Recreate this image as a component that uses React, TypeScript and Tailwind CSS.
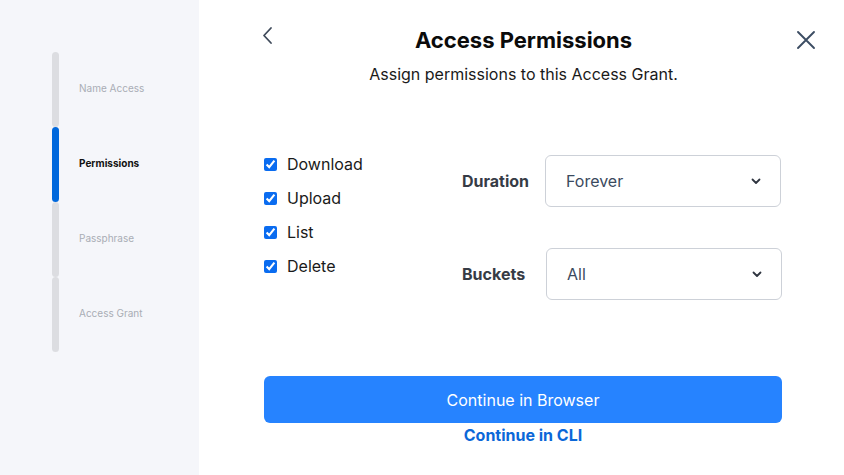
import React from "react";

const steps = [
  { label: "Name Access", active: false },
  { label: "Permissions", active: true },
  { label: "Passphrase", active: false },
  { label: "Access Grant", active: false },
];

const perms = ["Download", "Upload", "List", "Delete"];

function ChevronDown() {
  return (
    <svg width="10" height="7" viewBox="0 0 10 7" fill="none">
      <path d="M1.5 1.5 L5 5 L8.5 1.5" stroke="#2f3540" strokeWidth="1.8" strokeLinecap="round" strokeLinejoin="round" />
    </svg>
  );
}

function Select({ value }: { value: string }) {
  return (
    <div className="flex h-[52px] w-[236px] items-center justify-between rounded-[6px] border border-[#cdd1d8] bg-white pl-[20px] pr-[19px]">
      <span className="text-[16px] text-[#3b4a5e]">{value}</span>
      <ChevronDown />
    </div>
  );
}

export default function App() {
  return (
    <div
      className="flex h-[475px] w-[844px] overflow-hidden bg-white"
      style={{ fontFamily: "Inter, 'Noto Sans', sans-serif" }}
    >
      {/* Sidebar */}
      <aside className="flex h-full w-[199px] shrink-0 flex-col bg-[#f5f6fa] pl-[52px] pt-[52px]">
        {steps.map((s) => (
          <div key={s.label} className="flex h-[75px] items-center">
            <div
              className={
                s.active
                  ? "h-full w-[7px] rounded-[4px] bg-[#0068dc]"
                  : "h-full w-[7px] rounded-[4px] bg-[#dcdde1]"
              }
            />
            <span
              className={
                s.active
                  ? "mb-[2px] ml-[20px] text-[10px] font-bold text-[#111111]"
                  : "mb-[2px] ml-[20px] text-[10px] text-[#a9adb5]"
              }
            >
              {s.label}
            </span>
          </div>
        ))}
      </aside>

      {/* Main */}
      <main className="flex flex-1 flex-col">
        <div className="grid grid-cols-[1fr_auto_1fr] pt-[26px]">
          <div className="flex items-start pl-[62px]">
            <svg width="14" height="19" viewBox="0 0 14 19" fill="none">
              <path d="M10 2 L3 9.5 L10 17" stroke="#3f4a5a" strokeWidth="1.8" strokeLinecap="round" strokeLinejoin="round" />
            </svg>
          </div>
          <div className="flex flex-col items-center pl-[4px]">
            <h1 className="text-[22px] font-bold leading-[28px] text-[#0b0b0b]">Access Permissions</h1>
            <p className="mt-[8px] text-[16px] leading-[24px] text-[#1a1a1a]">
              Assign permissions to this Access Grant.
            </p>
          </div>
          <div className="flex items-start justify-end pr-[27px] pt-[3px]">
            <svg width="22" height="22" viewBox="0 0 22 22" fill="none">
              <path d="M3 3 L19 19 M19 3 L3 19" stroke="#3c4d63" strokeWidth="1.9" strokeLinecap="round" />
            </svg>
          </div>
        </div>

        <div className="ml-[65px] mr-[62px] mt-[66px] flex flex-col">
          <div className="flex justify-between">
            <div className="flex flex-col gap-[10px]">
              {perms.map((p) => (
                <label key={p} className="flex h-[24px] items-center">
                  <input
                    type="checkbox"
                    defaultChecked
                    className="m-0 h-[13px] w-[13px] accent-[#0a6cf0]"
                  />
                  <span className="ml-[10px] text-[16px] text-[#1a1a1a]">{p}</span>
                </label>
              ))}
            </div>
            <div className="flex flex-col pt-[3px]">
              <div className="flex items-center">
                <span className="w-[83px] text-[16px] font-bold text-[#363b45]">Duration</span>
                <Select value="Forever" />
                <div className="w-[1px]" />
              </div>
              <div className="mt-[41px] flex items-center">
                <span className="w-[84px] text-[16px] font-bold text-[#363b45]">Buckets</span>
                <Select value="All" />
              </div>
            </div>
          </div>

          <button className="mt-[76px] flex h-[47px] w-full items-center justify-center rounded-[6px] bg-[#2683ff] text-[16px] font-normal text-white">
            Continue in Browser
          </button>
          <div className="flex justify-center">
            <span className="text-[16px] font-bold leading-[24px] text-[#0b67d8]">Continue in CLI</span>
          </div>
        </div>
      </main>
    </div>
  );
}
